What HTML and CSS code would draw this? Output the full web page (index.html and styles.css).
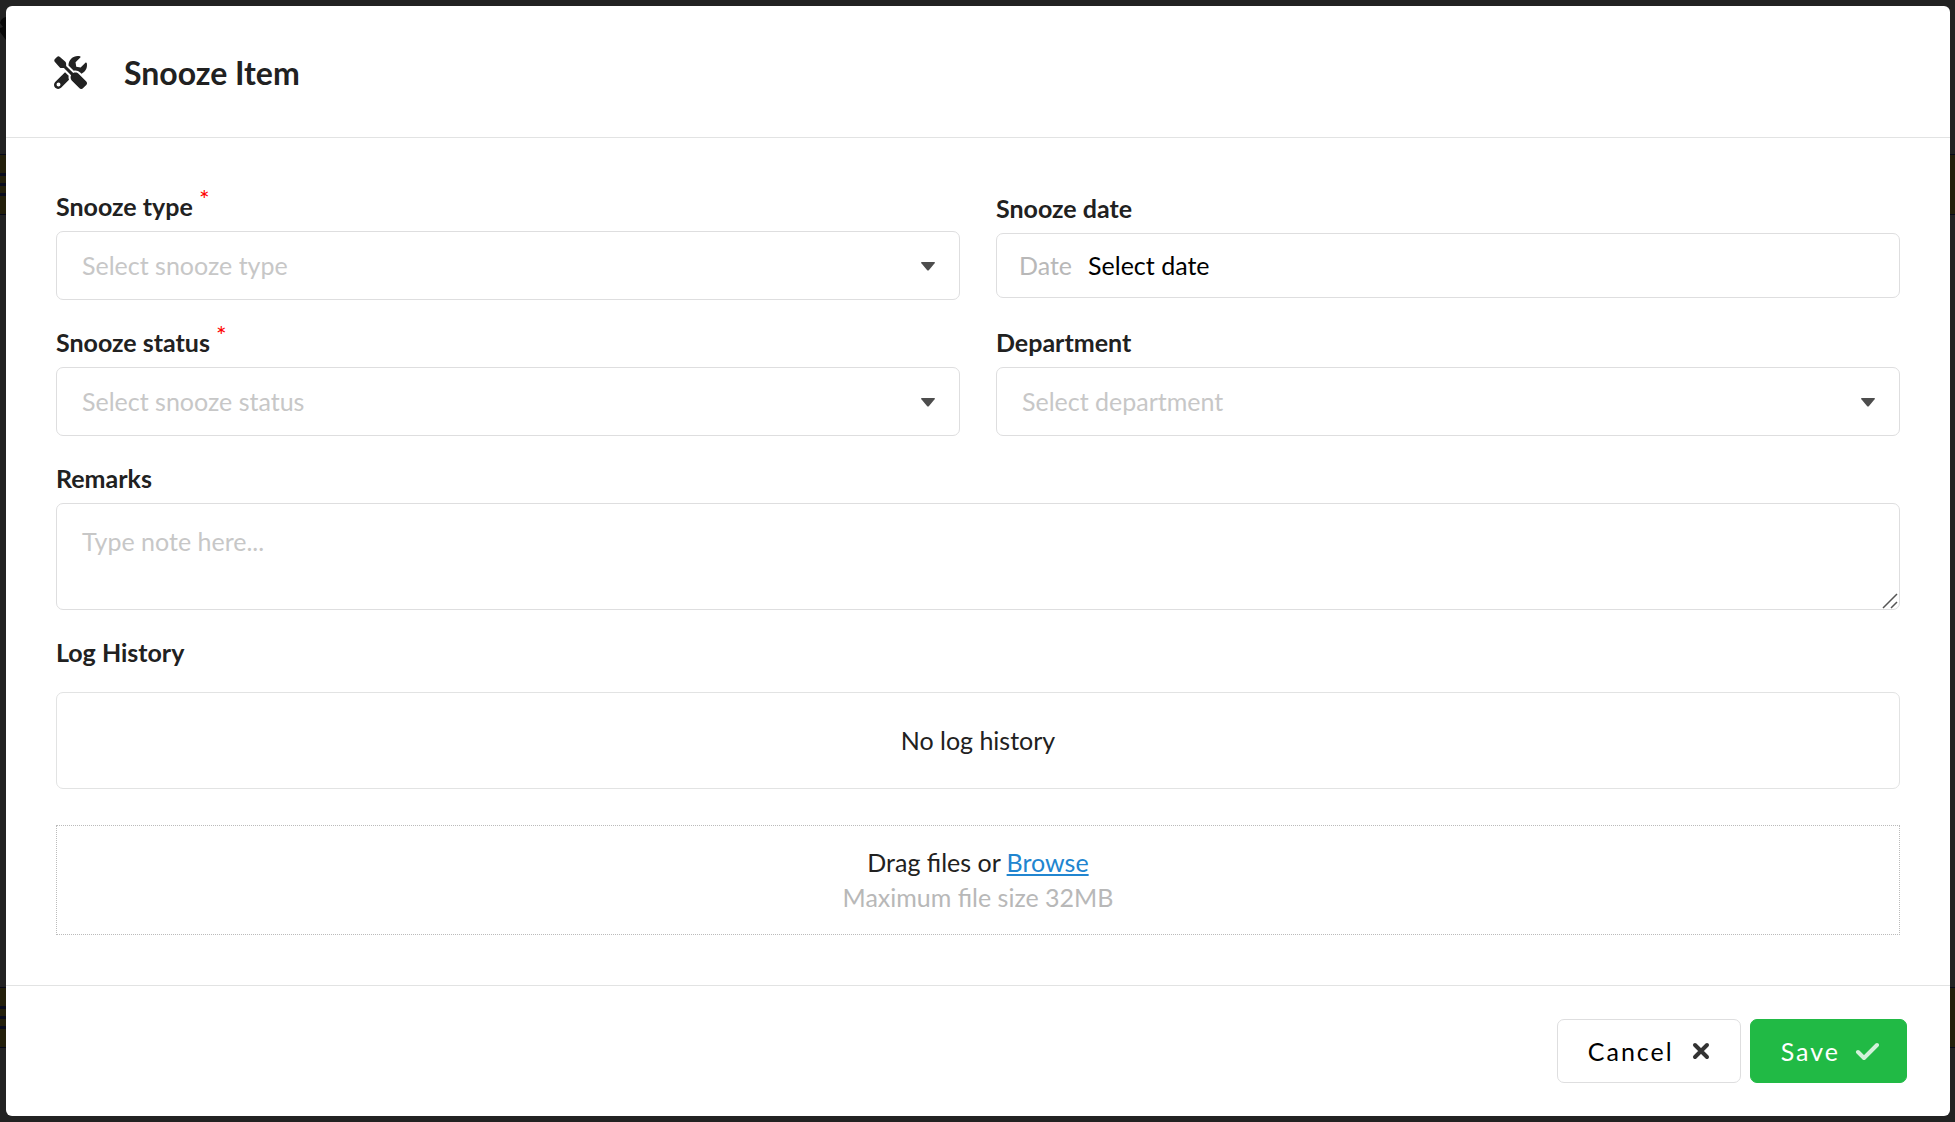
FILE: index.html
```html
<!DOCTYPE html>
<html lang="en">
<head>
    <meta charset="UTF-8">
    <meta name="viewport" content="width=device-width, initial-scale=1.0">
    <title>Snooze Item</title>
    <link rel="stylesheet" href="styles.css">
</head>
<body>
    <svg class="page-icon" viewBox="0 0 16 24" aria-hidden="true"><path d="M6 0Q1 1 0 6l3 4-3 1v4l6 8h10V0z"/></svg>
    <div class="page-row row-top"></div>
    <div class="page-row row-bottom"></div>
    <form class="modal">
        <header class="modal-header">
            <svg class="tools-icon" viewBox="0 0 512 512" aria-hidden="true">
                <path d="M501 396L384 279c-23-23-58-28-85-14L188 154V118Q188 98 173 86L92 14Q68-6 46 14L14 46Q-6 68 14 92L86 173Q98 188 118 188h36l111 111c-14 27-9 62 14 85l117 117c15 15 38 15 53 0l52-52c15-15 15-38 0-53zM331.700 225c28.300 0 54.900 11 74.900 31l19.400 19.400c15.800-6.900 30.800-16.500 43.800-29.500 37.100-37.100 49.700-89.300 37.900-136.700-2.200-9-13.500-12.100-20.100-5.500l-74.400 74.400-67.900-11.300L334 98.900l74.400-74.400c6.600-6.600 3.400-17.900-5.700-20.200-47.400-11.700-99.600.9-136.600 37.900-28.500 28.500-41.900 66.100-41.200 103.600l82.100 82.100c8.100-1.900 16.500-2.900 24.700-2.900zM227.800 307l-56.700-56.700L18.700 402.800c-25 25-25 65.500 0 90.500s65.500 25 90.500 0l123.600-123.600c-7.600-19.900-9.900-41.600-5-62.700zM70 472c-17 0-30-13-30-30s13-30 30-30 30 13 30 30-13 30-30 30z"/>
            </svg>
            <h1 class="title">Snooze Item</h1>
        </header>

        <div class="modal-body">
            <div class="fields">
                <div class="field">
                    <label class="label" for="type">Snooze type <span class="required">*</span></label>
                    <div class="select-wrap">
                        <select class="control select" id="type" required>
                            <option value="">Select snooze type</option>
                        </select>
                        <svg class="caret" viewBox="0 0 14 9" aria-hidden="true"><path d="M1 0h12q2 0 0 2L8 8q-1 1-2 0L1 2q-2-2 0-2z"/></svg>
                    </div>
                </div>
                <div class="field">
                    <label class="label" for="date">Snooze date</label>
                    <div class="control date-box">
                        <span class="date-prefix">Date</span>
                        <input class="date-input" id="date" type="text" value="Select date">
                    </div>
                </div>
                <div class="field">
                    <label class="label" for="status">Snooze status <span class="required">*</span></label>
                    <div class="select-wrap">
                        <select class="control select" id="status" required>
                            <option value="">Select snooze status</option>
                        </select>
                        <svg class="caret" viewBox="0 0 14 9" aria-hidden="true"><path d="M1 0h12q2 0 0 2L8 8q-1 1-2 0L1 2q-2-2 0-2z"/></svg>
                    </div>
                </div>
                <div class="field">
                    <label class="label" for="department">Department</label>
                    <div class="select-wrap">
                        <select class="control select" id="department">
                            <option value="">Select department</option>
                        </select>
                        <svg class="caret" viewBox="0 0 14 9" aria-hidden="true"><path d="M1 0h12q2 0 0 2L8 8q-1 1-2 0L1 2q-2-2 0-2z"/></svg>
                    </div>
                </div>
            </div>

            <div class="field">
                <label class="label" for="remarks">Remarks</label>
                <div class="textarea-wrap">
                    <textarea class="control textarea" id="remarks" placeholder="Type note here..."></textarea>
                    <svg class="grip" viewBox="0 0 16 16" aria-hidden="true"><path d="M1 15L15 1M9 15l6-6"/></svg>
                </div>
            </div>

            <section class="history">
                <h2 class="label">Log History</h2>
                <div class="history-box">No log history</div>
            </section>

            <div class="dropzone">
                <p>Drag files or <a class="browse" href="#">Browse</a></p>
                <p class="hint">Maximum file size 32MB</p>
            </div>
        </div>

        <footer class="modal-footer">
            <button class="button" type="button">
                Cancel
                <svg class="button-icon" viewBox="0 0 24 24" aria-hidden="true"><path d="M6 6l12 12M18 6L6 18"/></svg>
            </button>
            <button class="button save" type="submit">
                Save
                <svg class="button-icon" viewBox="0 0 24 24" aria-hidden="true"><path d="M3 13l6 6L22 6"/></svg>
            </button>
        </footer>
    </form>
</body>
</html>
```
FILE: styles.css
```css
* {
    box-sizing: border-box;
    margin: 0;
    padding: 0;
}
body {
    display: flex;
    min-height: 100vh;
    padding: 6px 5px 6px 6px;
    background: #222;
    color: #212121;
    font-family: Lato, "Liberation Sans", sans-serif;
    font-size: 25px;
    line-height: 35px;
}
/* dimmed page behind the modal */
.page-icon {
    position: absolute;
    left: 0;
    top: 17px;
    width: 16px;
    height: 24px;
    fill: #080808;
}
.page-row {
    position: absolute;
    left: 0;
    right: 0;
    height: 61px;
    background: #231f0b;
    border: 1px solid #060818;
    border-width: 1px 0;
}
.page-row::before {
    content: "";
    position: absolute;
    left: 0;
    top: 18px;
    width: 6px;
    height: 23px;
    background: repeating-linear-gradient(#090b1c 0 3px, #231f0b 3px 10px);
}
.row-top {
    top: 154px;
}
.row-bottom {
    top: 987px;
}
.modal {
    position: relative;
    flex: 1;
    display: flex;
    flex-direction: column;
    background: #fff;
    border-radius: 6px;
}
.modal-header {
    display: flex;
    align-items: center;
    gap: 37px;
    padding: 43px 48px 41px;
    border-bottom: 1px solid #e2e3e3;
}
.tools-icon {
    width: 33px;
    height: 33px;
    fill: #222;
}
.title {
    font-size: 32px;
    line-height: 47px;
}
.modal-body {
    flex: 1;
    display: flex;
    flex-direction: column;
    padding: 51px 50px 49px;
}
.fields {
    display: grid;
    grid-template-columns: 1fr 1fr;
    align-items: center;
    gap: 25px 36px;
    margin-bottom: 25px;
}
.label {
    display: block;
    margin-bottom: 7px;
    font-size: 25px;
    font-weight: 700;
    line-height: 35px;
}
.required {
    color: #f00;
    font-size: 25px;
    font-weight: 400;
    line-height: 20px;
    vertical-align: top;
}
.control {
    display: block;
    width: 100%;
    background: #fff;
    border: 1px solid #dededf;
    border-radius: 7px;
    font: inherit;
}
.select-wrap,
.textarea-wrap {
    position: relative;
}
.select {
    height: 69px;
    padding: 0 25px;
    appearance: none;
    color: #c7c7c7;
}
.caret {
    position: absolute;
    right: 25px;
    top: 31px;
    width: 14px;
    height: 9px;
    fill: #4d4d4d;
    pointer-events: none;
}
.date-box {
    display: flex;
    align-items: center;
    gap: 16px;
    height: 65px;
    padding: 0 22px;
}
.date-prefix {
    color: #b8b8b8;
}
.date-input {
    flex: 1;
    min-width: 0;
    border: 0;
    outline: 0;
    background: none;
    color: #000;
    font: inherit;
}
.textarea {
    height: 107px;
    padding: 20px 25px;
    resize: none;
}
.textarea::placeholder {
    color: #c7c7c7;
}
.grip {
    position: absolute;
    right: 2px;
    bottom: 1px;
    width: 16px;
    height: 16px;
    fill: none;
    stroke: #555;
    stroke-width: 1.5;
}
.history {
    margin-top: 25px;
}
.history .label {
    margin-bottom: 22px;
}
.history-box {
    padding: 30px;
    border: 1px solid #e2e3e3;
    border-radius: 7px;
    text-align: center;
}
.dropzone {
    margin-top: 36px;
    padding: 19px;
    border: 1px dotted #bbb;
    text-align: center;
}
.browse {
    color: #2185d0;
}
.hint {
    color: #b8b8b8;
}
.modal-footer {
    display: flex;
    justify-content: flex-end;
    gap: 9px;
    padding: 33px 43px;
    border-top: 1px solid #e2e3e3;
}
.button {
    display: flex;
    align-items: center;
    gap: 15px;
    height: 64px;
    padding: 0 27px 0 30px;
    background: #fff;
    border: 1px solid #dededf;
    border-radius: 7px;
    color: #000;
    font: inherit;
    letter-spacing: 2px;
}
.button-icon {
    width: 24px;
    height: 24px;
    fill: none;
    stroke: #333;
    stroke-width: 4;
    stroke-linecap: round;
    stroke-linejoin: round;
}
.save {
    background: #21ba45;
    border-color: #21ba45;
    color: #fff;
}
.save .button-icon {
    stroke: #d3f1da;
}
```
